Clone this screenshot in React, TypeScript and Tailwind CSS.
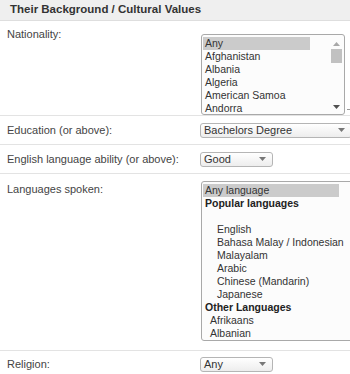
import React from "react";

const nationalities = ["Any", "Afghanistan", "Albania", "Algeria", "American Samoa", "Andorra"];

type LangOpt = { text: string; kind: "opt" | "group" | "blank"; indent?: number };

const languages: LangOpt[] = [
  { text: "Any language", kind: "opt" },
  { text: "Popular languages", kind: "group" },
  { text: "", kind: "blank" },
  { text: "English", kind: "opt", indent: 12 },
  { text: "Bahasa Malay / Indonesian", kind: "opt", indent: 12 },
  { text: "Malayalam", kind: "opt", indent: 12 },
  { text: "Arabic", kind: "opt", indent: 12 },
  { text: "Chinese (Mandarin)", kind: "opt", indent: 12 },
  { text: "Japanese", kind: "opt", indent: 12 },
  { text: "Other Languages", kind: "group" },
  { text: "Afrikaans", kind: "opt", indent: 5 },
  { text: "Albanian", kind: "opt", indent: 5 },
];

function Arrow({ className }: { className?: string }) {
  return (
    <svg width="7" height="4" viewBox="0 0 7 4" className={className}>
      <path d="M0 0h7L3.5 4z" fill="currentColor" />
    </svg>
  );
}

function Dropdown({ value, width }: { value: string; width: string }) {
  return (
    <div
      className={`flex h-[15px] items-center justify-between rounded-[3px] border border-[#b5b5b5] bg-gradient-to-b from-white to-[#ededed] pl-[3px] pr-[6px] text-[11px] leading-none text-[#333] ${width}`}
    >
      <span>{value}</span>
      <Arrow className="text-[#777]" />
    </div>
  );
}

function Row({ label, children, className }: { label: string; children: React.ReactNode; className?: string }) {
  return (
    <div className={`flex border-b border-[#e3e3e3] ${className ?? ""}`}>
      <div className="w-[201px] shrink-0 pl-[7px] text-[11px] leading-[13px] text-[#444]">{label}</div>
      <div className="flex min-w-0 flex-1">{children}</div>
    </div>
  );
}

export default function App() {
  return (
    <div
      className="h-[374px] w-[350px] overflow-hidden bg-white"
      style={{ fontFamily: '"Liberation Sans", Arial, sans-serif' }}
    >
      <div className="flex h-[21px] items-center border-b border-[#dedede] bg-[#efefef] pl-[10px] text-[11.5px] font-bold text-[#333]">
        Their Background / Cultural Values
      </div>

      <Row label="Nationality:" className="h-[95px] pt-[7px]">
        <div className="-mt-[1px] flex items-end">
          <div className="flex h-[81px] w-[144px] rounded-[3px] border border-[#a9a9a9] bg-[#fcfcfc] pt-[2px] pl-[1px] text-[10.5px] leading-[13px] text-[#333]">
            <div className="w-[107px]">
              {nationalities.map((n, i) => (
                <div key={n} className={`pl-[2px] ${i === 0 ? "bg-[#cbcbcb]" : ""}`}>
                  {n}
                </div>
              ))}
            </div>
            <div className="ml-auto mr-[1px] flex w-[13px] flex-col items-center pt-[5px] pb-[5px]">
              <svg width="7" height="4" viewBox="0 0 7 4" className="text-[#a8a8a8]">
                <path d="M3.5 0L7 4H0z" fill="currentColor" />
              </svg>
              <div className="mt-[3px] h-[14px] w-[11px] bg-[#c1c1c1]" />
              <Arrow className="mt-auto text-[#505050]" />
            </div>
          </div>
          <div className="mb-[5px] ml-[2px] h-px w-[3px] bg-[#999]" />
        </div>
      </Row>

      <Row label="Education (or above):" className="h-[29px] items-center">
        <Dropdown value="Bachelors Degree" width="w-[152px] shrink-0 -ml-[1px]" />
      </Row>

      <Row label="English language ability (or above):" className="h-[29px] items-center">
        <Dropdown value="Good" width="w-[73px] -ml-[1px]" />
      </Row>

      <Row label="Languages spoken:" className="h-[177px] pt-[9px]">
        <div className="-mt-[2px] h-[160px] w-[155px] shrink-0 rounded-[3px] border border-[#a9a9a9] bg-[#fcfcfc] pt-[2px] pl-[1px] text-[10.5px] leading-[13px] text-[#333]">
          {languages.map((l, i) => (
            <div
              key={i}
              className={`h-[13px] w-[136px] whitespace-nowrap ${l.kind === "group" ? "font-bold text-[#222]" : ""} ${i === 0 ? "bg-[#cbcbcb]" : ""}`}
              style={{ paddingLeft: 2 + (l.indent ?? 0) }}
            >
              {l.text}
            </div>
          ))}
        </div>
      </Row>

      <Row label="Religion:" className="h-[23px] items-center border-b-0 pt-[3px]">
        <Dropdown value="Any" width="w-[73px] -ml-[1px]" />
      </Row>
    </div>
  );
}
